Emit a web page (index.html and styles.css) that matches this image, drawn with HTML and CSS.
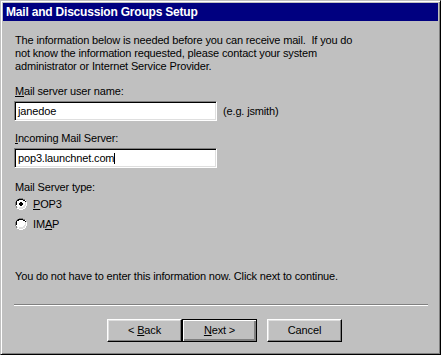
FILE: index.html
```html
<!DOCTYPE html>
<html>
<head>
<meta charset="utf-8">
<link rel="stylesheet" href="styles.css">
</head>
<body>
<div class="window">
  <div class="titlebar">Mail and Discussion Groups Setup</div>
  <div class="content">
    <p class="intro">The information below is needed before you can receive mail.&nbsp; If you do<br>not know the information requested, please contact your system<br>administrator or Internet Service Provider.</p>
    <div class="label label-first"><u>M</u>ail server user name:</div>
    <div class="field-row">
      <div class="field">janedoe</div>
      <span class="hint">(e.g. jsmith)</span>
    </div>
    <div class="label label-second"><u>I</u>ncoming Mail Server:</div>
    <div class="field-row field-row-second">
      <div class="field">pop3.launchnet.com<span class="caret"></span></div>
    </div>
    <div class="label label-third">Mail Server type:</div>
    <div class="radios">
      <div class="radio-row">
        <svg class="radio" width="12" height="12" viewBox="0 0 12 12">
          <path d="M4 0h4v1h2v1h1v2h1v4h-1v2h-1v1h-2v1h-4v-1h-2v-1h-1v-2h-1v-4h1v-2h1v-1h2z" fill="#fff"/>
          <path d="M4 0h4v1h2v1h-2v-1h-4v1h-2v2h-1v4h1v2h-1v-2h-1v-4h1v-2h1v-1h2z" fill="#808080"/>
          <path d="M4 1h4v1h2v1h1v1h-1v-1h-2v-1h-4v1h-2v4h-1v-4h1v-1h1v-1h2z" fill="#000"/>
          <path d="M10 4h1v4h-1v2h-2v1h-4v-1h-2v-1h1v1h1v-1h4v-1h1v-1h1z" fill="#dfdfdf"/>
          <path d="M11 4h1v4h-1v2h-1v1h-2v1h-4v-1h4v-1h2v-2h1z" fill="#fff"/>
          <rect x="5" y="4" width="2" height="4" fill="#000"/>
          <rect x="4" y="5" width="4" height="2" fill="#000"/>
        </svg>
        <span class="radio-text"><u>P</u>OP3</span>
      </div>
      <div class="radio-row">
        <svg class="radio" width="12" height="12" viewBox="0 0 12 12">
          <path d="M4 0h4v1h2v1h1v2h1v4h-1v2h-1v1h-2v1h-4v-1h-2v-1h-1v-2h-1v-4h1v-2h1v-1h2z" fill="#fff"/>
          <path d="M4 0h4v1h2v1h-2v-1h-4v1h-2v2h-1v4h1v2h-1v-2h-1v-4h1v-2h1v-1h2z" fill="#808080"/>
          <path d="M4 1h4v1h2v1h1v1h-1v-1h-2v-1h-4v1h-2v4h-1v-4h1v-1h1v-1h2z" fill="#000"/>
          <path d="M10 4h1v4h-1v2h-2v1h-4v-1h-2v-1h1v1h1v-1h4v-1h1v-1h1z" fill="#dfdfdf"/>
          <path d="M11 4h1v4h-1v2h-1v1h-2v1h-4v-1h4v-1h2v-2h1z" fill="#fff"/>
        </svg>
        <span class="radio-text">IM<u>A</u>P</span>
      </div>
    </div>
    <p class="note">You do not have to enter this information now. Click next to continue.</p>
    <div class="separator"></div>
    <div class="buttons">
      <div class="btn">&lt; <u>B</u>ack</div>
      <div class="btn btn-default"><u>N</u>ext &gt;</div>
      <div class="btn btn-cancel">Cancel</div>
    </div>
  </div>
</div>
</body>
</html>
```

FILE: styles.css
```css
html, body {
  margin: 0;
  padding: 0;
  background: #c0c0c0;
}

.window {
  width: 441px;
  height: 355px;
  box-sizing: border-box;
  background: #c0c0c0;
  border: 1px solid;
  border-color: #c0c0c0 #000 #000 #c0c0c0;
  box-shadow: inset 1px 1px 0 #fff, inset -1px -1px 0 #808080;
  padding: 2px;
  font-family: "Liberation Sans", Arial, sans-serif;
  font-size: 11px;
  line-height: 13px;
  letter-spacing: -0.15px;
  color: #000;
}

.titlebar {
  height: 18px;
  background: #000080;
  color: #fff;
  font-weight: bold;
  font-size: 12px;
  line-height: 18px;
  letter-spacing: -0.2px;
  padding-left: 3px;
}

.content {
  padding-left: 12px;
}

.intro {
  margin: 13px 0 0 0;
}

.label {
  margin-top: 12px;
}

.label-second {
  margin-top: 11px;
}

.label-third {
  margin-top: 13px;
}

.field-row {
  display: flex;
  align-items: center;
  margin-top: 3px;
  margin-left: -1px;
}

.field {
  width: 203px;
  height: 20px;
  box-sizing: border-box;
  background: #fff;
  border: 1px solid;
  border-color: #808080 #fff #fff #808080;
  box-shadow: inset 1px 1px 0 #000, inset -1px -1px 0 #dfdfdf;
  padding: 3px 0 0 3px;
  line-height: 13px;
  white-space: nowrap;
}

.caret {
  display: inline-block;
  width: 1px;
  height: 11px;
  background: #000;
  vertical-align: -2px;
}

.hint {
  margin-left: 6px;
}

.radio-row {
  display: flex;
  align-items: center;
  height: 20px;
}

.radio {
  display: block;
  flex: none;
}

.radio-text {
  margin-left: 6px;
}

.note {
  margin: 36px 0 0 0;
}

.separator {
  margin: 21px 0 0 -1px;
  width: 414px;
  border-top: 1px solid #808080;
  border-bottom: 1px solid #fff;
}

.buttons {
  display: flex;
  margin: 13px 0 0 92px;
}

.btn {
  width: 75px;
  height: 23px;
  box-sizing: border-box;
  border: 1px solid;
  border-color: #fff #000 #000 #fff;
  box-shadow: inset -1px -1px 0 #808080, inset 1px 1px 0 #dfdfdf;
  text-align: center;
  line-height: 21px;
}

.btn-default {
  border: 1px solid #000;
  box-shadow: inset 1px 1px 0 #fff, inset -1px -1px 0 #808080, inset -2px -2px 0 #808080;
}

.btn-cancel {
  margin-left: 10px;
}
```
